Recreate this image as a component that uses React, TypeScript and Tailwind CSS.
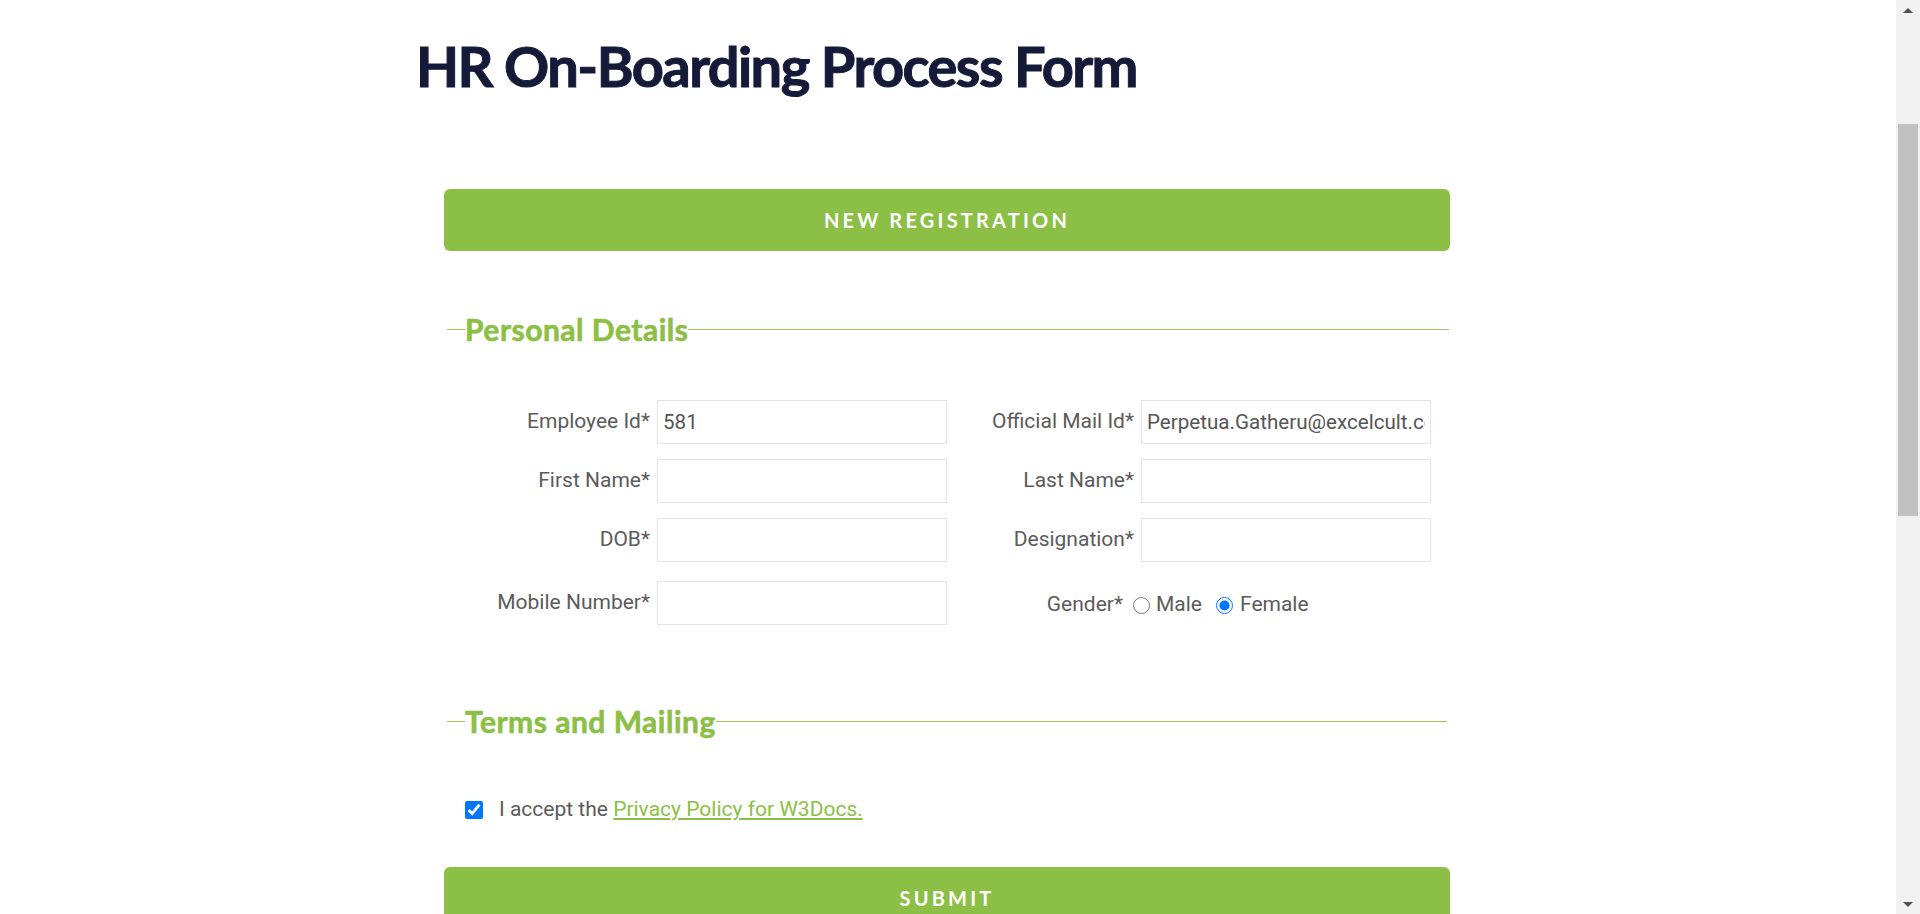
import { useState } from "react";

const lato = { fontFamily: "Lato, 'Open Sans', sans-serif" };
const roboto = { fontFamily: "Roboto, 'Liberation Sans', sans-serif" };

type Field = { label: string; value?: string };

const leftFields: Field[] = [
    { label: "Employee Id*", value: "581" },
    { label: "First Name*" },
    { label: "DOB*" },
    { label: "Mobile Number*" },
];

const rightFields: Field[] = [
    { label: "Official Mail Id*", value: "Perpetua.Gatheru@excelcult.com" },
    { label: "Last Name*" },
    { label: "Designation*" },
];

const FieldRow = ({ item, extra }: { item: Field; extra?: string }) => (
    <div className={`flex items-center gap-[7px] h-[44px] ${extra || ""}`}>
        <label className="flex-1 text-right text-[21px] text-[#5b5b5b] whitespace-nowrap">
            {item.label}
        </label>
        <input
            type="text"
            defaultValue={item.value || ""}
            className="w-[290px] h-[44px] shrink-0 border border-[#e4e4e4] px-[5px] text-[20.6px] text-[#555555] outline-none"
        />
    </div>
);

const Legend = ({ text }: { text: string }) => (
    <legend
        className="text-[30px] leading-[1.2] font-bold tracking-[0.5px] text-[#8cbf45] [-webkit-text-stroke:0.6px_#8cbf45]"
        style={lato}>
        {text}
    </legend>
);

// fake browser scrollbar, the reference was taken scrolled part way down
const ScrollBar = () => (
    <div className="fixed top-0 right-0 w-[24px] h-screen bg-[#f1f1f1] flex flex-col items-center">
        <div className="h-[20px] flex items-center justify-center">
            <div className="w-0 h-0 border-x-[5px] border-x-transparent border-b-[5px] border-b-[#505050]" />
        </div>
        <div className="mt-[104px] w-[20px] h-[392px] bg-[#c1c1c1]" />
        <div className="flex-1" />
        <div className="h-[20px] flex items-center justify-center">
            <div className="w-0 h-0 border-x-[5px] border-x-transparent border-t-[5px] border-t-[#505050]" />
        </div>
    </div>
);

const App = () => {
    const [gender, setGender] = useState("female");
    const [accepted, setAccepted] = useState(true);

    return (
        <div className="min-h-screen bg-white pb-[50px]" style={roboto}>
            <div className="ml-[416px] w-[1034px]">
                <h1
                    className="pt-[32px] text-[56px] leading-[1.2] font-bold tracking-[-1.55px] text-[#141a38] [-webkit-text-stroke:1px_#141a38]"
                    style={lato}>
                    HR On-Boarding Process Form
                </h1>

                <div className="ml-[28px] w-[1006px]">
                    <button
                        className="mt-[90px] w-full h-[62px] rounded-md bg-[#8cbf45] text-white text-[20px] font-bold uppercase tracking-[3.2px]"
                        style={lato}>
                        New Registration
                    </button>

                    <fieldset className="mt-[60px] mx-[3px] px-[18px] border-0 border-t border-[#9ac65c]">
                        <Legend text="Personal Details" />
                        <div className="pt-[53px] grid grid-cols-[482px_484px] gap-y-[15px]">
                            <FieldRow item={leftFields[0]} />
                            <FieldRow item={rightFields[0]} />
                            <FieldRow item={leftFields[1]} />
                            <FieldRow item={rightFields[1]} />
                            <FieldRow item={leftFields[2]} />
                            <FieldRow item={rightFields[2]} />
                            <FieldRow item={leftFields[3]} extra="mt-[4px]" />
                            <div className="flex items-center gap-[10px] h-[44px] mt-[6px]">
                                <span className="flex-1 text-right text-[21px] text-[#5b5b5b]">Gender*</span>
                                <div className="w-[298px] flex items-center text-[21px] text-[#5b5b5b]">
                                    <input
                                        type="radio"
                                        name="gender"
                                        checked={gender === "male"}
                                        onChange={() => setGender("male")}
                                        className="w-[17px] h-[17px]"
                                    />
                                    <span className="ml-[6px]">Male</span>
                                    <input
                                        type="radio"
                                        name="gender"
                                        checked={gender === "female"}
                                        onChange={() => setGender("female")}
                                        className="ml-[14px] w-[17px] h-[17px]"
                                    />
                                    <span className="ml-[7px]">Female</span>
                                </div>
                            </div>
                        </div>
                    </fieldset>

                    <fieldset className="mt-[76px] mx-[3px] px-[18px] border-0 border-t border-[#9ac65c]">
                        <Legend text="Terms and Mailing" />
                        <div className="pt-[55px] flex items-center text-[21px] text-[#5b5b5b]">
                            <input
                                type="checkbox"
                                checked={accepted}
                                onChange={() => setAccepted(!accepted)}
                                className="w-[18px] h-[18px]"
                            />
                            <span className="ml-[16px]">
                                I accept the{" "}
                                <a href="#" className="text-[#8cbf45] underline">
                                    Privacy Policy for W3Docs.
                                </a>
                            </span>
                        </div>
                    </fieldset>

                    <button
                        className="mt-[41px] w-full h-[62px] rounded-md bg-[#8cbf45] text-white text-[20px] font-bold uppercase tracking-[3.2px]"
                        style={lato}>
                        Submit
                    </button>
                </div>
            </div>
            <ScrollBar />
        </div>
    );
};

export default App;
